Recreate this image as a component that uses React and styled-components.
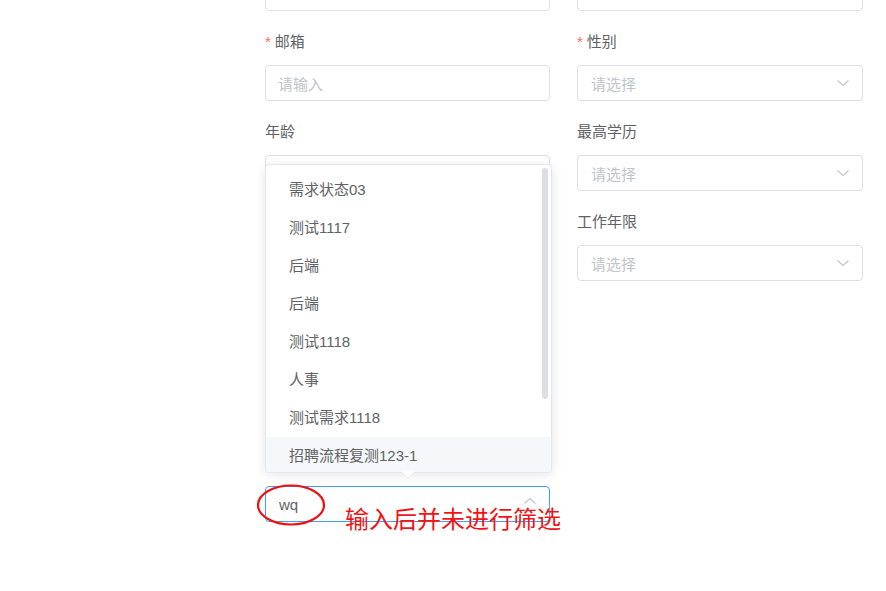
import React from "react";
import styled, { createGlobalStyle } from "styled-components";

const Global = createGlobalStyle`
  html, body { margin: 0; padding: 0; background: #fff; }
  body {
    font-family: "Liberation Sans", "Noto Sans CJK SC", sans-serif;
    color: #606266;
    overflow: hidden;
  }
`;

const Page = styled.div`
  width: 886px;
  height: 591px;
  overflow: hidden;
  box-sizing: border-box;
  padding-left: 265px;
`;

const Form = styled.div`
  display: grid;
  grid-template-columns: 285px 286px;
  column-gap: 27px;
  align-items: start;
  margin-top: -25px;
`;

const Column = styled.div`
  display: flex;
  flex-direction: column;
`;

const Item = styled.div`
  display: flex;
  flex-direction: column;
  margin-bottom: 19px;
`;

const Label = styled.div`
  height: 24px;
  line-height: 24px;
  font-size: 15px;
  color: #606266;
  margin-bottom: 11px;
  display: flex;
  align-items: center;
`;

const Star = styled.span`
  color: #f56c6c;
  margin-right: 4px;
  font-size: 15px;
`;

const Box = styled.div`
  position: relative;
  height: ${(p) => (p.$tall ? "97px" : "36px")};
  box-sizing: border-box;
  border: 1px solid ${(p) => (p.$focus ? "#409eff" : "#dcdfe6")};
  border-radius: 4px;
  background: #fff;
  padding: 0 12px 0 ${(p) => (p.$select ? "13px" : "12px")};
  display: flex;
  align-items: ${(p) => (p.$tall ? "flex-start" : "center")};
  justify-content: space-between;
  font-size: 15px;
`;

const Placeholder = styled.span`
  color: #c0c4cc;
`;

const Value = styled.span`
  color: #606266;
`;

const Chevron = styled.svg`
  width: 14px;
  height: 14px;
  flex: none;
  margin-left: auto;
  transform: ${(p) => (p.$up ? "rotate(180deg) translateY(3px)" : "none")};
`;

const Dropdown = styled.div`
  position: absolute;
  left: -1px;
  bottom: calc(100% + 14px);
  width: 287px;
  height: 309px;
  box-sizing: border-box;
  border: 1px solid #e4e7ed;
  border-radius: 4px;
  background: #fff;
  box-shadow: 0 2px 12px 0 rgba(0, 0, 0, 0.1);
  z-index: 10;

  &::before,
  &::after {
    content: "";
    position: absolute;
    left: 50%;
    margin-left: -8px;
    width: 0;
    height: 0;
    border-left: 7px solid transparent;
    border-right: 7px solid transparent;
  }
  &::before {
    bottom: -7px;
    border-top: 7px solid #e4e7ed;
  }
  &::after {
    bottom: -6px;
    border-top: 7px solid #fff;
  }
`;

const List = styled.ul`
  list-style: none;
  margin: 0;
  padding: 6px 0 0;
  height: 100%;
  box-sizing: border-box;
  overflow: hidden;
  border-radius: 4px;
`;

const Option = styled.li`
  height: 38px;
  line-height: 38px;
  padding: 0 23px;
  font-size: 15px;
  color: #606266;
  white-space: nowrap;
  background: ${(p) => (p.$hover ? "#f5f7fa" : "transparent")};
`;

const Thumb = styled.div`
  position: absolute;
  right: 3px;
  top: 3px;
  width: 6px;
  height: 231px;
  border-radius: 3px;
  background: rgba(144, 147, 153, 0.3);
`;

const Ring = styled.svg`
  position: absolute;
  left: -10px;
  top: -5px;
  width: 72px;
  height: 46px;
  overflow: visible;
  z-index: 20;
`;

const Note = styled.div`
  position: absolute;
  left: 79px;
  top: 16px;
  font-size: 24px;
  line-height: 30px;
  color: #f01414;
  white-space: nowrap;
  font-family: "Noto Sans CJK SC", sans-serif;
  z-index: 20;
`;

const ChevronIcon = ({ up }) => (
  <Chevron viewBox="0 0 14 14" $up={up}>
    <path d="M1.5 4.5 L7 9.5 L12.5 4.5" fill="none" stroke="#c0c4cc" strokeWidth="1.1" />
  </Chevron>
);

const options = [
  "需求状态03",
  "测试1117",
  "后端",
  "后端",
  "测试1118",
  "人事",
  "测试需求1118",
  "招聘流程复测123-1",
];

export default function App() {
  return (
    <>
      <Global />
      <Page>
        <Form>
          <Column>
            <Item>
              <Box />
            </Item>
            <Item>
              <Label>
                <Star>*</Star>邮箱
              </Label>
              <Box>
                <Placeholder>请输入</Placeholder>
              </Box>
            </Item>
            <Item>
              <Label>年龄</Label>
              <Box />
            </Item>
            <Item>
              <Label />
              <Box $select />
            </Item>
            <Item>
              <Label />
              <Box $tall />
            </Item>
            <Item>
              <Label />
              <Box $select $focus>
                <Value>wq</Value>
                <ChevronIcon up />
                <Dropdown>
                  <List>
                    {options.map((o, i) => (
                      <Option key={i} $hover={i === options.length - 1}>
                        {o}
                      </Option>
                    ))}
                  </List>
                  <Thumb />
                </Dropdown>
                <Ring viewBox="0 0 72 46">
                  <ellipse cx="35" cy="23" rx="33" ry="19.5" fill="none" stroke="#ee1111" strokeWidth="2.2" />
                </Ring>
                <Note>输入后并未进行筛选</Note>
              </Box>
            </Item>
          </Column>
          <Column>
            <Item>
              <Box />
            </Item>
            <Item>
              <Label>
                <Star>*</Star>性别
              </Label>
              <Box $select>
                <Placeholder>请选择</Placeholder>
                <ChevronIcon />
              </Box>
            </Item>
            <Item>
              <Label>最高学历</Label>
              <Box $select>
                <Placeholder>请选择</Placeholder>
                <ChevronIcon />
              </Box>
            </Item>
            <Item>
              <Label>工作年限</Label>
              <Box $select>
                <Placeholder>请选择</Placeholder>
                <ChevronIcon />
              </Box>
            </Item>
          </Column>
        </Form>
      </Page>
    </>
  );
}
